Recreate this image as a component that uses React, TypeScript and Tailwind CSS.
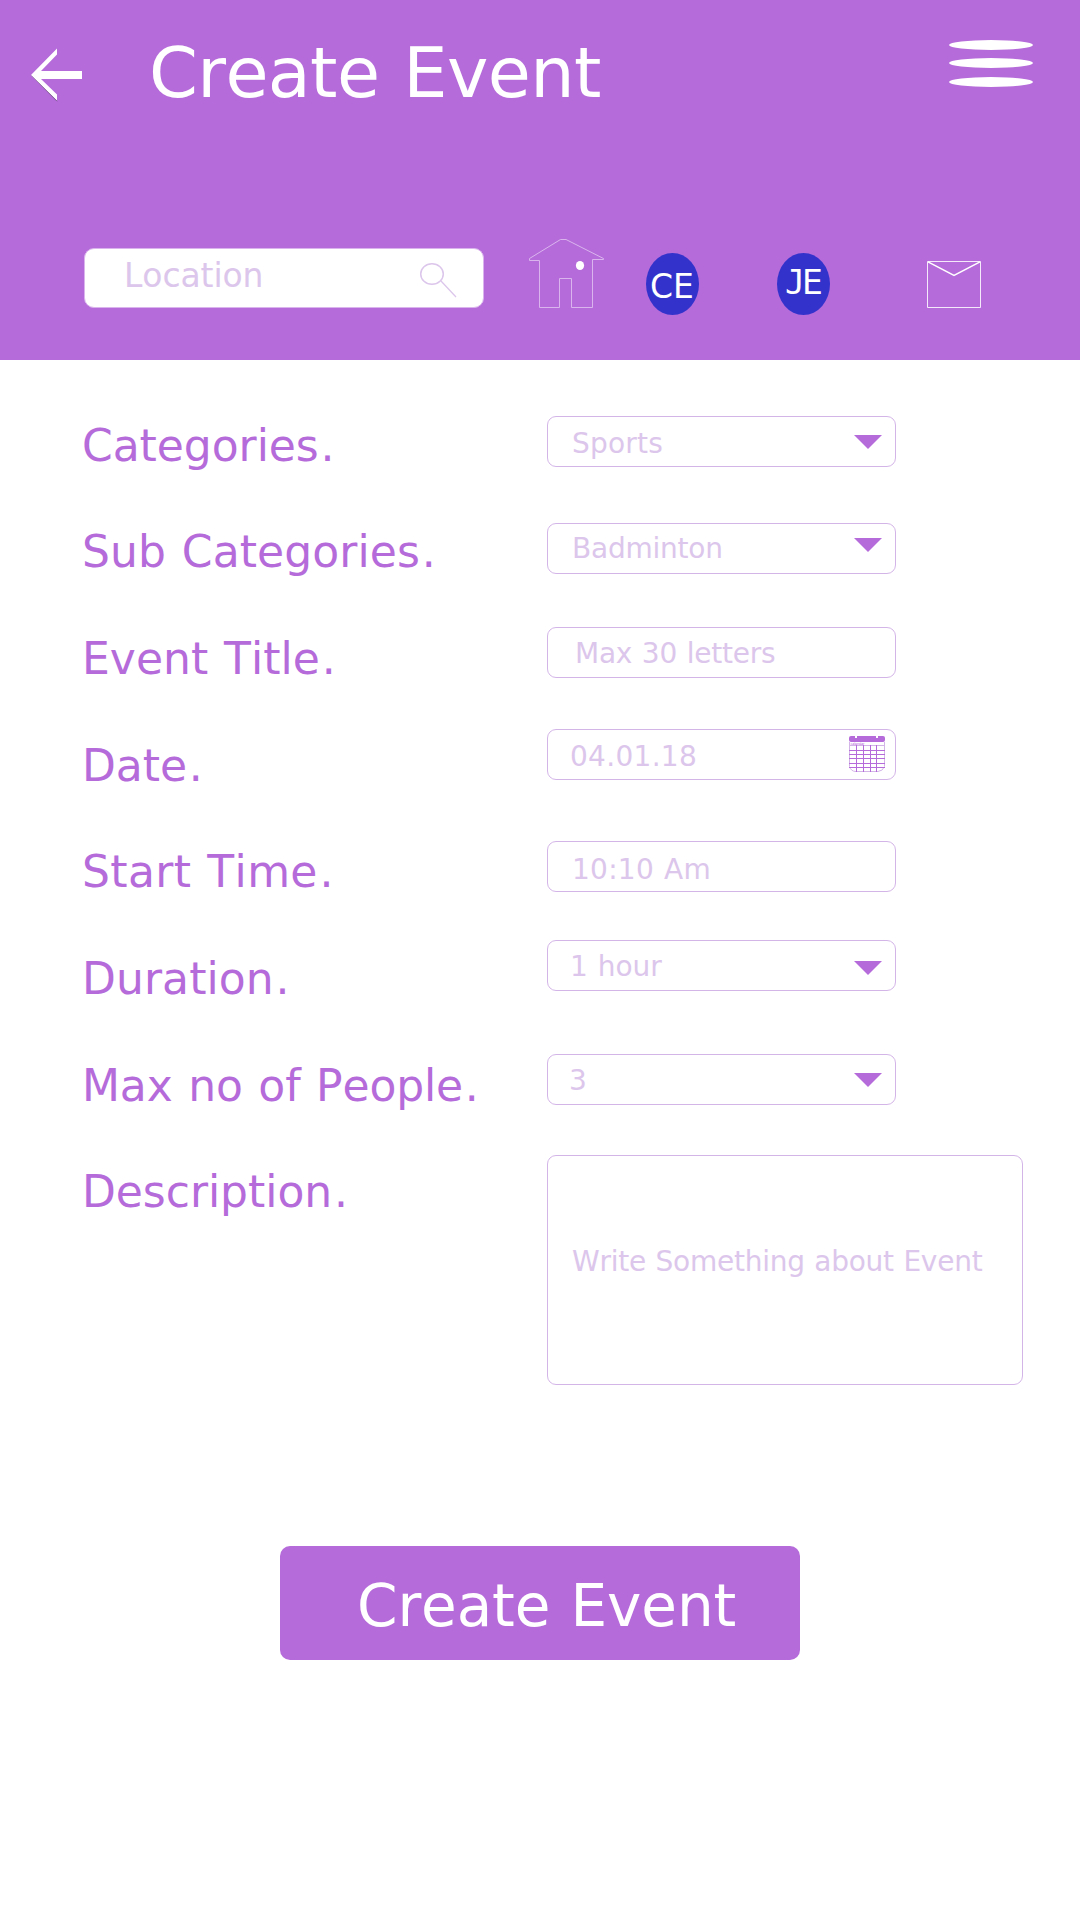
import React from "react";

type LabelItem = { text: string; tracking: string };

const labels: LabelItem[] = [
  { text: "Categories", tracking: "tracking-[-0.001em]" },
  { text: "Sub Categories", tracking: "-mt-px mb-px tracking-[0.002em]" },
  { text: "Event Title", tracking: "tracking-[0.001em]" },
  { text: "Date", tracking: "tracking-[-0.001em]" },
  { text: "Start Time", tracking: "tracking-[0.008em]" },
  { text: "Duration", tracking: "tracking-[0.002em]" },
  { text: "Max no of People", tracking: "tracking-[-0.003em]" },
  { text: "Description", tracking: "tracking-[-0.001em]" },
];

type FieldItem = {
  value: string;
  box: string;
  text: string;
  icon?: "caret" | "calendar";
  iconOffset?: string;
};

const fields: FieldItem[] = [
  { value: "Sports", box: "", text: "pl-[24px] pt-[2px] tracking-[0.008em]", icon: "caret", iconOffset: "mt-[18px]" },
  { value: "Badminton", box: "mt-[56px]", text: "pl-[24px] tracking-[-0.008em]", icon: "caret", iconOffset: "mt-[14px]" },
  { value: "Max 30 letters", box: "mt-[53px]", text: "pl-[27px] pt-px tracking-[-0.008em]" },
  { value: "04.01.18", box: "mt-[51px]", text: "pl-[22px] pt-[2px] tracking-[0.0105em]", icon: "calendar" },
  { value: "10:10 Am", box: "mt-[61px]", text: "pl-[24px] pt-[3px] tracking-[0.009em]" },
  { value: "1 hour", box: "mt-[48px]", text: "pl-[22px] pt-px", icon: "caret", iconOffset: "mt-[20px]" },
  { value: "3", box: "mt-[63px]", text: "pl-[21px] pt-px", icon: "caret", iconOffset: "mt-[18px]" },
];

function BackArrow() {
  return (
    <svg className="ml-[30px] mt-[47px] h-[56px] w-[54px] shrink-0" viewBox="30 47 54 56">
      <path d="M31.5 75.5 57 101.2" stroke="#6d4a82" strokeWidth="1" fill="none" />
      <path d="M31 75 57 48.5V54.5L41 71H82V79H41L57 94.5V100.5Z" fill="#fff" />
    </svg>
  );
}

function MenuIcon() {
  return (
    <div className="ml-auto mr-[47px] mt-[40px] flex flex-col">
      <span className="h-[10px] w-[84px] rounded-[50%] bg-white" />
      <span className="mt-[8px] h-[10px] w-[84px] rounded-[50%] bg-white" />
      <span className="mt-[9px] h-[10px] w-[84px] rounded-[50%] bg-white" />
    </div>
  );
}

function SearchIcon() {
  return (
    <svg className="ml-auto mr-[26px] mt-[13px] h-[36px] w-[38px]" viewBox="419 262 38 36" fill="none" stroke="#dcc6eb">
      <ellipse cx="432" cy="274" rx="11.3" ry="10.3" strokeWidth="1.5" />
      <path d="M441 281 456 297" strokeWidth="1.2" />
    </svg>
  );
}

function HouseIcon() {
  return (
    <svg className="ml-[43px] mt-[10px] h-[72px] w-[79px] shrink-0" viewBox="527 238 79 72">
      <path
        d="M529.5 258.5 560.5 239.5H566L603.5 258.5V259.5H592.5V307.5H571.5V278.5H559.5V307.5H539.5V260.5H529.5Z"
        fill="none"
        stroke="#dab5ed"
        strokeWidth="1"
      />
      <ellipse cx="580" cy="265.5" rx="4.1" ry="4.6" fill="#fff" />
    </svg>
  );
}

function MailIcon() {
  return (
    <svg className="ml-[96px] mt-[31px] h-[50px] w-[56px] shrink-0" viewBox="926 259 56 50" fill="none" stroke="#fff">
      <path d="M927.5 261.5H980.5V307.5H927.5Z" strokeWidth="1" strokeOpacity="0.85" />
      <path d="M928 261.8 954 275.3 980 261.8" strokeWidth="1.5" />
    </svg>
  );
}

function CalendarIcon() {
  return (
    <svg className="mr-[9px] mt-[6px] h-[37px] w-[37px] shrink-0" viewBox="849 736 37 37">
      <rect x="849" y="736" width="36" height="6" rx="2" fill="#b56bda" />
      <path d="M855 736h2v2h-2zM876 736h2v2h-2z" fill="#fff" />
      <path d="M849.5 742V766.5Q851 771.5 856 771.5H878Q883 771 884.5 766.5V742M849 745.5H885" fill="none" stroke="#d4b5e8" />
      <path d="M849 750.5H885M849 754.5H885M849 758.5H885M849 763.5H885M849 767.5H885M856.5 745V772M863.5 745V772M870.5 745V772M876.5 745V772" stroke="#b56bda" />
      <text x="850.5" y="745" fontSize="3.5" textLength="14" fill="#b56bda" fontFamily="DejaVu Sans">calendar</text>
    </svg>
  );
}

function Field({ value, box, text, icon, iconOffset }: FieldItem) {
  return (
    <div className={`flex h-[51px] w-[349px] items-start rounded-[9px] border border-[#d4b5e8] ${box}`}>
      <span className={`whitespace-nowrap text-[28px] leading-[49px] text-[#dcc6eb] [word-spacing:0.034em] ${text}`}>{value}</span>
      <span className="grow" />
      {icon === "caret" && (
        <svg className={`mr-[13px] h-[14px] w-[28px] shrink-0 ${iconOffset}`} viewBox="0 0 28 14">
          <path d="M0 0H28L14 14Z" fill="#b56bda" />
        </svg>
      )}
      {icon === "calendar" && <CalendarIcon />}
    </div>
  );
}

export default function App() {
  return (
    <div className="h-[1920px] w-[1080px] overflow-hidden bg-white font-['DejaVu_Sans',Verdana,sans-serif] [font-kerning:none]">
      <header className="flex h-[360px] flex-col bg-[#b56bda]">
        <div className="flex h-[228px] items-start">
          <BackArrow />
          <h1 className="ml-[65px] mt-[28px] whitespace-nowrap text-[70px] leading-[90px] tracking-[-0.009em] text-white [word-spacing:0.034em]">
            Create Event
          </h1>
          <MenuIcon />
        </div>
        <div className="flex items-start">
          <div className="ml-[84px] mt-[20px] flex h-[60px] w-[400px] shrink-0 items-start rounded-[10px] border border-[#dab5ed] bg-white">
            <span className="pl-[39px] text-[33px] leading-[54px] tracking-[-0.003em] text-[#dcc6eb]">Location</span>
            <SearchIcon />
          </div>
          <HouseIcon />
          <div className="ml-[40px] mt-[25px] h-[62px] w-[53px] shrink-0 rounded-[50%] bg-[#3333cc] pl-[4px] text-[33px] leading-[67px] text-white">
            CE
          </div>
          <div className="ml-[78px] mt-[25px] flex h-[62px] w-[53px] shrink-0 rounded-[50%] bg-[#3333cc] pl-[8px] text-[33px] leading-[59px] text-white">
            <span className="-mr-[3px] font-['DejaVu_Sans_Mono']">J</span>
            <span>E</span>
          </div>
          <MailIcon />
        </div>
      </header>

      <main className="flex h-[1186px] items-start">
        <div className="ml-[82px] mt-[32px] flex w-[465px] flex-col">
          {labels.map((l) => (
            <div
              key={l.text}
              className={`h-[106.6px] whitespace-nowrap text-[44px] leading-[107px] text-[#b56bda] [word-spacing:0.04em] ${l.tracking}`}
            >
              {l.text}
              <span className="ml-[0.04em]">.</span>
            </div>
          ))}
        </div>
        <div className="mt-[56px] flex flex-col">
          {fields.map((f) => (
            <Field key={f.value} {...f} />
          ))}
          <div className="mt-[50px] h-[230px] w-[476px] rounded-[9px] border border-[#d4b5e8] pl-[24px] pt-[81px] text-[28px] leading-[49px] tracking-[-0.009em] text-[#dcc6eb] [word-spacing:0.034em]">
            Write Something about Event
          </div>
        </div>
      </main>

      <button className="ml-[280px] block h-[114px] w-[520px] rounded-[10px] bg-[#b56bda] pl-[77px] text-left text-[58px] leading-[120px] tracking-[-0.002em] text-white [word-spacing:0.034em]">
        Create Event
      </button>
    </div>
  );
}
